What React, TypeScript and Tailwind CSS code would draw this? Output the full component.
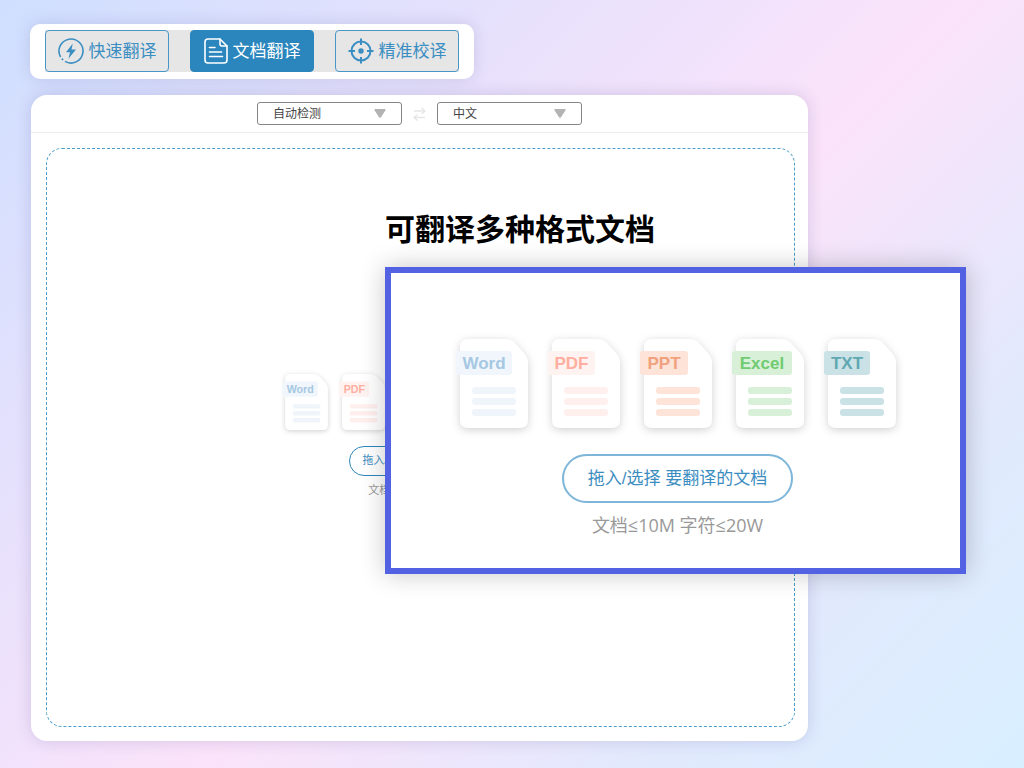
import React, { useState } from "react";
import clsx from "clsx";

type FileKind = {
  name: string;
  tagWidth: number;
  tag: string;
  text: string;
  line: string;
};

const fileKinds: FileKind[] = [
  { name: "Word", tagWidth: 56, tag: "#f0f6fc", text: "#a6c8e2", line: "#f0f5fb" },
  { name: "PDF", tagWidth: 47, tag: "#fff3f1", text: "#ffaea0", line: "#fff0ee" },
  { name: "PPT", tagWidth: 48, tag: "#fde3d8", text: "#f0a27e", line: "#fde3d8" },
  { name: "Excel", tagWidth: 60, tag: "#d8f0d8", text: "#6fcb70", line: "#d8f0d8" },
  { name: "TXT", tagWidth: 46, tag: "#cae2e6", text: "#5fa8b2", line: "#cae2e6" },
];

function FileIcon({ kind, className }: { kind: FileKind; className: string }) {
  return (
    <svg viewBox="0 0 68 89" className={clsx("shrink-0 overflow-visible", className)} role="img" aria-label={kind.name}>
      <path
        d="M8 0H45Q51 0 55 4L64 14Q68 18 68 24V81Q68 89 60 89H8Q0 89 0 81V8Q0 0 8 0Z"
        fill="#fff"
        className="drop-shadow-[0_2px_4px_rgba(0,0,0,0.18)]"
      />
      <rect x="-4" y="12" width={kind.tagWidth} height="24" rx="3" fill={kind.tag} />
      <text
        x={kind.tagWidth / 2 - 4}
        y="30"
        textAnchor="middle"
        fontFamily="'Liberation Sans', Arial, sans-serif"
        fontWeight="700"
        fontSize="17"
        fill={kind.text}
      >
        {kind.name}
      </text>
      {[48, 59, 70].map((y) => (
        <rect key={y} x="12" y={y} width="44" height="7" rx="3" fill={kind.line} />
      ))}
    </svg>
  );
}

function QuickIcon() {
  return (
    <svg viewBox="0 0 26 26" className="size-[26px]" fill="none" stroke="currentColor" strokeWidth="1.6" aria-hidden="true">
      <path d="M2.600 19A12 12 0 1 1 7 23.400" />
      <path d="M3.800 20.600l1.300 1.400" />
      <path d="M14.800 5.500L8 14.300h4l-1.600 6.400L18 11.600h-4.500z" fill="currentColor" stroke="none" />
    </svg>
  );
}

function DocumentIcon() {
  return (
    <svg viewBox="0 0 24 26" className="h-[26px] w-6" fill="none" stroke="currentColor" strokeWidth="1.6" strokeLinecap="round" strokeLinejoin="round" aria-hidden="true">
      <path d="M16 1H4Q1 1 1 4V22Q1 25 4 25H20Q23 25 23 22V8Z" />
      <path d="M16 1V6Q16 8 18 8H23" />
      <path d="M5.500 9.500H11M5.500 14H17.500M5.500 18.500H18.500" />
    </svg>
  );
}

function TargetIcon() {
  return (
    <svg viewBox="0 0 26 26" className="size-[26px]" fill="none" stroke="currentColor" strokeWidth="2" aria-hidden="true">
      <circle cx="13" cy="13" r="9.5" />
      <circle cx="13" cy="13" r="2.7" fill="currentColor" stroke="none" />
      <path d="M13 .5V7M13 19V25.500M.5 13H7M19 13H25.500" />
    </svg>
  );
}

const modes = [
  { id: "quick", label: "快速翻译", Icon: QuickIcon },
  { id: "document", label: "文档翻译", Icon: DocumentIcon },
  { id: "proof", label: "精准校译", Icon: TargetIcon },
];

function LanguageSelect({ label, options }: { label: string; options: string[] }) {
  return (
    <div className="relative">
      <select
        aria-label={label}
        className="block h-[23px] w-[145px] appearance-none rounded-[3px] border border-[#858585] bg-white py-0 pl-[15px] text-xs leading-5 text-[#444]"
      >
        {options.map((option) => (
          <option key={option}>{option}</option>
        ))}
      </select>
      <svg viewBox="0 0 12 9" className="pointer-events-none absolute top-[7px] right-4 h-[9px] w-3" fill="#b3b3b3" aria-hidden="true">
        <path d="M1 0H11Q12.300 0 11.500 1.200L7 8.200Q6 9.500 5 8.200L.5 1.200Q-.3 0 1 0Z" />
      </svg>
    </div>
  );
}

function UploadArea({ large = false }: { large?: boolean }) {
  return (
    <div className="flex flex-col items-center">
      <div className={clsx("flex", large ? "gap-6" : "gap-[14px]")}>
        {fileKinds.map((kind) => (
          <FileIcon key={kind.name} kind={kind} className={large ? "h-[89px] w-[68px]" : "h-14 w-[43px]"} />
        ))}
      </div>
      <button
        type="button"
        className={clsx(
          "rounded-full bg-white font-['Liberation_Sans','Noto_Sans_CJK_SC',sans-serif] whitespace-nowrap text-[#3c8dbf]",
          large
            ? "mt-[26px] h-[49px] w-[231px] border-2 border-[#7db6d8] text-[17px]"
            : "mt-4 h-[30px] w-36 border border-[#2e86bc] text-[11px]",
        )}
      >
        拖入/选择 要翻译的文档
      </button>
      <p
        className={clsx(
          "font-['Open_Sans','Noto_Sans_CJK_SC',sans-serif] whitespace-nowrap text-[#999]",
          large ? "mt-[10px] text-lg leading-6" : "mt-[6px] text-[11px] leading-4",
        )}
      >
        文档≤10M 字符≤20W
      </p>
    </div>
  );
}

export default function App() {
  const [mode, setMode] = useState("document");

  return (
    <div className="relative flex min-h-screen flex-col items-stretch bg-[linear-gradient(135deg,#cfdfff_0%,#fbe3fa_54%,#e2e9fd_78%,#d8efff_100%)] pt-6 pr-[216px] pb-[27px] pl-[30px] font-['Noto_Sans','Noto_Sans_CJK_SC',sans-serif]">
      <nav className="self-start rounded-[10px] bg-white px-[15px] pt-[6px] pb-[7px] shadow-[0_0_16px_rgba(80,70,140,0.18)]">
        <div className="flex gap-[21px] bg-[#e6e6e6]">
          {modes.map(({ id, label, Icon }) => (
            <button
              key={id}
              type="button"
              aria-pressed={mode === id}
              onClick={() => setMode(id)}
              className={clsx(
                "flex h-[42px] w-[124px] items-center justify-center gap-[5px] rounded border text-[17px] whitespace-nowrap",
                mode === id ? "border-[#2b86bd] bg-[#2b86bd] text-white" : "border-[#4796c5] text-[#3b8ec2]",
              )}
            >
              <Icon />
              {label}
            </button>
          ))}
        </div>
      </nav>

      <main className="mt-4 ml-px flex grow flex-col rounded-2xl bg-white shadow-[0_0_16px_rgba(80,70,140,0.2)]">
        <div className="flex h-[38px] items-center justify-center gap-[11px] border-b border-[#ededed]">
          <LanguageSelect label="源语言" options={["自动检测", "中文", "英语"]} />
          <button type="button" aria-label="交换语言" className="text-[#e6e6e6]">
            <svg viewBox="0 0 13 14" className="h-[14px] w-[13px]" fill="none" stroke="currentColor" strokeWidth="1.4" aria-hidden="true">
              <path d="M1 4H12M8.500 .8L12 4L8.500 7M12 10.500H1M4.500 7.500L1 10.500L4.500 13.500" />
            </svg>
          </button>
          <LanguageSelect label="目标语言" options={["中文", "英语"]} />
        </div>
        <div className="m-[15px] mr-[13px] mb-[14px] flex grow items-center justify-center rounded-2xl border border-dashed border-[#4a9dca] pb-1">
          <UploadArea />
        </div>
      </main>

      <section className="absolute top-[206px] left-[385px] w-[581px]">
        <h1 className="text-3xl leading-[46px] font-bold text-black">可翻译多种格式文档</h1>
        <div className="mt-[15px] border-[6px] border-[#5262e3] bg-white pt-[66px] pb-[31px] pl-1 shadow-[0_0_24px_rgba(0,0,0,0.22)]">
          <UploadArea large />
        </div>
      </section>
    </div>
  );
}
